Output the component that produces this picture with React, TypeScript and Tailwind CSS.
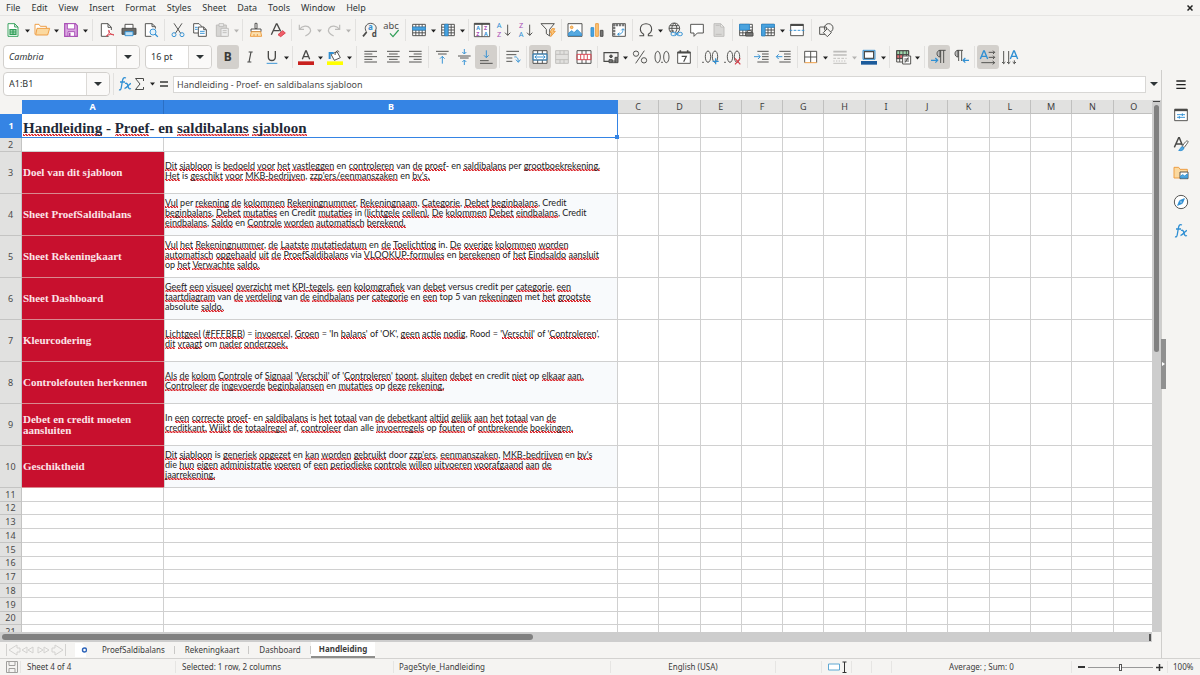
import { type ReactNode } from 'react';
import { clsx } from 'clsx';

const INK = '#4a4a48';
const BLUE = '#2f8fd3';
const ORANGE = '#ed9a3c';
const RED = '#d8414c';
const PURPLE = '#a94fb5';
const GREEN = '#2f9e57';
const MUTED = '#bdbcba';

type IconProps = { children: ReactNode; color?: string };

function Icon({ children, color = INK }: IconProps) {
  return (
    <svg
      className="h-4 w-4 shrink-0 overflow-visible"
      viewBox="0 0 24 24"
      fill="none"
      stroke={color}
      strokeWidth="1.4"
      aria-hidden="true"
    >
      {children}
    </svg>
  );
}

function Caret({ muted = false }: { muted?: boolean }) {
  return (
    <svg className="h-1 w-[5px]" viewBox="0 0 5 4" aria-hidden="true">
      <path d="M0 .5h5L2.500 3.500z" fill={muted ? '#b5b4b2' : '#222'} />
    </svg>
  );
}

type ToolProps = {
  label: string;
  children: ReactNode;
  active?: boolean;
  menu?: boolean;
  muted?: boolean;
};

function Tool({ label, children, active, menu, muted }: ToolProps) {
  return (
    <>
      <button
        type="button"
        aria-label={label}
        aria-pressed={active}
        className={clsx(
          'flex h-6 w-[22px] shrink-0 items-center justify-center rounded-[3px]',
          active && 'bg-[#d3d0cc]'
        )}
      >
        {children}
      </button>
      {menu && (
        <button
          type="button"
          aria-label={`${label} options`}
          className="flex h-6 w-[7px] shrink-0 items-center justify-center pt-[2px]"
        >
          <Caret muted={muted} />
        </button>
      )}
    </>
  );
}

function Sep({ wide = false }: { wide?: boolean }) {
  return (
    <div className={clsx('flex h-[22px] shrink-0 justify-center', wide ? 'w-[7px]' : 'w-[5px]')}>
      <div className="w-px bg-[#e2e1df]" />
    </div>
  );
}

/* Shared drawings */

function Grid({ color = INK }: { color?: string }) {
  return (
    <path
      stroke={color}
      fill="#fff"
      d="M2.500 3.500h19v17h-19zM2.500 7.750h19M2.500 12h19M2.500 16.250h19M7.250 3.500v17M12 3.500v17M16.750 3.500v17"
    />
  );
}

type SvgTextProps = { x: number; y: number; size: number; fill: string; children: string; bold?: boolean };

function SvgText({ x, y, size, fill, children, bold }: SvgTextProps) {
  return (
    <text
      x={x}
      y={y}
      fontSize={size}
      fill={fill}
      stroke="none"
      fontWeight={bold ? 700 : 400}
      fontFamily="Noto Sans, sans-serif"
    >
      {children}
    </text>
  );
}

function FxIcon() {
  return (
    <svg className="h-[18px] w-4" viewBox="0 0 16 18" fill="none" stroke={BLUE} strokeWidth="1.300" aria-hidden="true">
      <path d="M9 3c-2.500-1-3.200.5-3.600 3L4.200 13c-.3 1.700-1 2.200-2.200 1.700M3 7h5" />
      <path d="M8 8.500c2-.8 2.500.5 3 2.500s1 3.500 3 2.500M14 8.500c-2 0-4 5-6.500 5" />
    </svg>
  );
}

function StandardBar() {
  return (
    <div role="toolbar" aria-label="Standard" className="flex h-[27px] items-center pl-[2px]">
      <Tool label="New" menu>
        <Icon color={GREEN}>
          <path fill="#fff" d="M4.500 2.500h10l5 5v14h-15zM14.500 2.500v5h5" />
          <path fill="#bfe5cb" d="M7.500 11.500h9v7h-9zM7.500 15h9M12 11.500v7" strokeWidth="1.800" />
        </Icon>
      </Tool>
      <Tool label="Open" menu>
        <Icon color={ORANGE}>
          <path fill="#fff" d="M1.500 18.500v-15h6l2 3h9v4" />
          <path fill="#fbd9a0" d="M4.500 9.500h19l-3 10h-18z" />
        </Icon>
      </Tool>
      <Tool label="Save" menu>
        <Icon color={PURPLE}>
          <path fill="#dba6e2" d="M2.500 2.500h16l3 3v16h-19z" strokeWidth="1.800" />
          <path fill="#fff" d="M6.500 2.500h11v8h-11zM7.500 14.500h10v7h-10z" />
          <path d="M10 16v5" strokeWidth="2.500" />
        </Icon>
      </Tool>
      <Sep wide />
      <Tool label="Export as PDF">
        <Icon>
          <path fill="#fff" d="M18.500 12V8l-5-5.500h-10v19h11M13.500 2.500V8h5" />
          <path stroke={RED} d="M11 21c3-2 5-5 4.500-8-.8-2-2 0-.5 2 1.500 2.500 4 4 7.500 4.500-3-2-7-1-11.500 1.500z" />
        </Icon>
      </Tool>
      <Tool label="Print">
        <Icon>
          <path fill="#6a6a68" d="M1.500 9.500h21v9h-21z" />
          <path fill="#fff" d="M6 3.500h12v6H6z" />
          <path stroke={BLUE} fill="#bfe0f5" d="M6 14.500h12v6H6z" />
        </Icon>
      </Tool>
      <Tool label="Print Preview">
        <Icon>
          <path fill="#fff" d="M18.500 10V7l-5-4.500h-10v19h9M13.500 2.500V7h5" />
          <circle cx="15" cy="15" r="4.500" stroke={BLUE} fill="#e3f2fb" />
          <path stroke={BLUE} d="M18.300 18.300l4 4" strokeWidth="2" />
        </Icon>
      </Tool>
      <Sep />
      <Tool label="Cut">
        <Icon>
          <path d="M6 2l10 15M18 2L8 17" />
          <circle cx="6" cy="19" r="3" stroke={BLUE} />
          <circle cx="18" cy="19" r="3" stroke={BLUE} />
        </Icon>
      </Tool>
      <Tool label="Copy">
        <Icon>
          <path fill="#fff" d="M2.500 2.500h8l4 4v10h-12z" />
          <path fill="#fff" d="M9.500 7.500h8l4 4v10h-12zM17.500 7.500v4h4" />
          <path stroke={BLUE} d="M4.500 8h4M4.500 11h4M12 14h7M12 17h7" />
        </Icon>
      </Tool>
      <Tool label="Paste" menu muted>
        <Icon color={MUTED}>
          <path fill="#d6d5d3" d="M3.500 4.500h15v17h-15z" />
          <path fill="#eee" d="M7.500 2.500h7v4h-7zM10.500 9.500h11v12h-11zM13 13h6M13 16h6" />
        </Icon>
      </Tool>
      <Sep />
      <Tool label="Clone Formatting">
        <Icon>
          <path d="M10.500 2h3v8h-3z" />
          <path fill="#fff" d="M4.500 10.500h15v4h-15z" />
          <path stroke={ORANGE} fill="#fbe0b0" d="M5 14.500h14l1.500 7h-17zM9 18v3M14 18v3" />
        </Icon>
      </Tool>
      <Tool label="Clear Direct Formatting">
        <Icon>
          <path d="M2 19L9.500 3h1L16 14M5 13h9" strokeWidth="2" />
          <path stroke={RED} fill="#ef5f6a" d="M12 19l7-6 4 3.500-7 5.500z" />
        </Icon>
      </Tool>
      <Sep />
      <Tool label="Undo" menu muted>
        <Icon color={MUTED}>
          <path d="M3.500 4v7h7M4 10.500c4-5 12-6 15.500-1 3 5-2 9-7 11.500" strokeWidth="1.800" />
        </Icon>
      </Tool>
      <Tool label="Redo" menu muted>
        <Icon color={MUTED}>
          <path d="M20.500 4v7h-7M20 10.500c-4-5-12-6-15.500-1-3 5 2 9 7 11.500" strokeWidth="1.800" />
        </Icon>
      </Tool>
      <Sep wide />
      <Tool label="Find and Replace">
        <Icon>
          <path d="M6.500 14.500c-4-6 0-12.500 6.500-12.500s10 6 7.500 10" />
          <path d="M7 15L1.500 21.500" strokeWidth="2.600" />
          <SvgText x={9} y={12} size={12} fill={BLUE} bold>a</SvgText>
          <SvgText x={14.500} y={23} size={12} fill={INK} bold>d</SvgText>
        </Icon>
      </Tool>
      <Tool label="Spelling">
        <Icon>
          <SvgText x={-1} y={11} size={14} fill={INK}>abc</SvgText>
          <path stroke={GREEN} d="M9 17l4.500 5L22 12" strokeWidth="1.800" />
        </Icon>
      </Tool>
      <Sep />
      <Tool label="Row" menu>
        <Icon>
          <Grid />
          <path fill="#4aa3de" stroke={BLUE} d="M2.500 7.750h19V12h-19z" />
        </Icon>
      </Tool>
      <Tool label="Column" menu>
        <Icon>
          <Grid />
          <path fill="#4aa3de" stroke={BLUE} d="M7.250 3.500H12v17H7.250z" />
        </Icon>
      </Tool>
      <Sep />
      <Tool label="Sort">
        <Icon>
          <path fill="#fff" d="M.5 2h23v20H.5zM12 2v20" />
          <path d="M.5 3h23" strokeWidth="2.500" />
          <SvgText x={3.500} y={12} size={8} fill={BLUE} bold>A</SvgText>
          <SvgText x={3.500} y={21} size={8} fill={PURPLE} bold>Z</SvgText>
          <SvgText x={15} y={12} size={8} fill={PURPLE} bold>Z</SvgText>
          <SvgText x={15} y={21} size={8} fill={BLUE} bold>A</SvgText>
        </Icon>
      </Tool>
      <Tool label="Sort Ascending">
        <Icon>
          <SvgText x={1} y={9} size={11} fill={BLUE}>A</SvgText>
          <SvgText x={1.500} y={23} size={11} fill={PURPLE}>Z</SvgText>
          <path d="M17.500 4v16M13.500 16l4 4 4-4" />
        </Icon>
      </Tool>
      <Tool label="Sort Descending">
        <Icon>
          <SvgText x={1.500} y={9} size={11} fill={PURPLE}>Z</SvgText>
          <SvgText x={1} y={23} size={11} fill={BLUE}>A</SvgText>
          <path d="M17.500 4v16M13.500 16l4 4 4-4" />
        </Icon>
      </Tool>
      <Tool label="AutoFilter">
        <Icon>
          <path d="M1.500 2.500h20l-7 8.500v10l-5-3.500V11z" />
          <path stroke={ORANGE} fill="#fbc77a" d="M18 10h4l-2 4h3l-7 8 1.500-6H15z" />
        </Icon>
      </Tool>
      <Sep />
      <Tool label="Insert Image">
        <Icon>
          <path fill="#fff" d="M1.500 2.500h21v19h-21z" />
          <path fill="#55a9e0" stroke={BLUE} d="M2.500 20.500v-4l5-3.500 3 3 5-4.500 6 6v3z" />
          <circle cx="7" cy="8" r="2" stroke={ORANGE} fill="#fbc77a" />
        </Icon>
      </Tool>
      <Tool label="Insert Chart">
        <Icon>
          <path fill="#4aa3de" stroke={BLUE} d="M3 8.500h4v13H3z" />
          <path fill="#fbc77a" stroke={ORANGE} d="M10 2.500h4v19h-4z" />
          <path fill="#777" d="M17 12.500h4v9h-4z" />
        </Icon>
      </Tool>
      <Tool label="Insert Pivot Table">
        <Icon>
          <path fill="#fff" d="M2.500 2.500h19v19h-19z" />
          <path d="M2.500 4.500h19M4.500 2.500v19" stroke="#777" strokeWidth="4" strokeDasharray="3.500 1.200" />
          <path stroke={BLUE} d="M10 18.500c5 0 8-2 8-8M15.500 12.500l2.500-2.500 2.500 2.500M12.500 16L10 18.500l2.500 2" />
        </Icon>
      </Tool>
      <Sep />
      <Tool label="Special Character" menu>
        <Icon>
          <path d="M2 20.500h6.500v-2C5 16.500 3.500 14 3.500 11c0-5 3.500-8.500 8.500-8.500s8.500 3.500 8.500 8.500c0 3-1.500 5.500-5 7.500v2H22" strokeWidth="1.600" />
        </Icon>
      </Tool>
      <Tool label="Insert Hyperlink">
        <Icon>
          <circle cx="11" cy="9.500" r="8" />
          <path d="M3 9.500h16M11 1.500c-5 5-5 11 0 16M11 1.500c5 5 5 11 0 16M4.500 5.500h13M4.500 13.500h6" />
          <rect x="6" y="15.500" width="8" height="5" rx="2.500" stroke={BLUE} fill="#f5f4f2" />
          <rect x="15" y="15.500" width="8" height="5" rx="2.500" stroke={BLUE} fill="#f5f4f2" />
          <path stroke={BLUE} d="M11 18h7" />
        </Icon>
      </Tool>
      <Tool label="Insert Comment">
        <Icon>
          <path fill="#fff" d="M2.500 3.500h19v13h-9l-5 5v-5h-5z" />
        </Icon>
      </Tool>
      <Tool label="Headers and Footers">
        <Icon color={MUTED}>
          <path fill="#d9d8d6" d="M4.500 2.500h10l5 5v14h-15zM14.500 2.500v5h5M7 5h6M7 18.500h9" />
        </Icon>
      </Tool>
      <Sep />
      <Tool label="Define Print Area">
        <Icon>
          <Grid />
          <path fill="#4aa3de" stroke={BLUE} d="M2.500 3.500H17v8.500H2.500z" />
          <path fill="#fff" d="M14 13h6v3h-6z" />
          <path fill="#777" d="M11.500 16h11v5h-11z" />
        </Icon>
      </Tool>
      <Tool label="Freeze Rows and Columns" menu>
        <Icon>
          <Grid />
          <path fill="#4aa3de" stroke={BLUE} d="M2.500 3.500h19v4.250H7.500v13h-5z" />
        </Icon>
      </Tool>
      <Tool label="Split Window">
        <Icon>
          <path fill="#fff" d="M2.500 3.500h19v17h-19z" />
          <path d="M2.500 4.500h19" strokeWidth="3" />
          <path stroke={BLUE} d="M1 12.500h22" strokeDasharray="4 2" />
        </Icon>
      </Tool>
      <Sep wide />
      <Tool label="Show Draw Functions">
        <Icon>
          <path d="M2.500 7.500h10v11h-10z" />
          <circle cx="16" cy="9" r="6.500" />
          <path fill="#f5f4f2" d="M14 10l6 6-6 6-6-6z" />
        </Icon>
      </Tool>
    </div>
  );
}

type ComboProps = { id: string; label: string; value: string; className: string; italic?: boolean };

function Combo({ id, label, value, className, italic }: ComboProps) {
  return (
    <div className={clsx('flex h-6 shrink-0 rounded-[4px] border border-[#d2d0cd] bg-white', className)}>
      <label htmlFor={id} className="sr-only">
        {label}
      </label>
      <input
        id={id}
        defaultValue={value}
        className={clsx('min-w-0 flex-1 bg-transparent px-[5px] text-[9px] text-[#2e3436] outline-none', italic && 'italic')}
      />
      <button
        type="button"
        aria-label={`Open ${label}`}
        className="flex w-[23px] items-center justify-center rounded-r-[4px] border-l border-[#dcdad7] bg-[#faf9f8]"
      >
        <svg className="h-1 w-2" viewBox="0 0 8 4" aria-hidden="true">
          <path d="M0 0h8L4 4z" fill="#2e3436" />
        </svg>
      </button>
    </div>
  );
}

function FormattingBar() {
  return (
    <div role="toolbar" aria-label="Formatting" className="flex h-[27px] items-center pl-[3px]">
      <Combo id="font-name" label="Font Name" value="Cambria" className="w-[137px]" italic />
      <Combo id="font-size" label="Font Size" value="16 pt" className="mr-[5px] ml-[5px] w-[67px]" />
      <Tool label="Bold" active>
        <Icon>
          <SvgText x={5.500} y={18.500} size={18} fill="#3a3a38" bold>B</SvgText>
        </Icon>
      </Tool>
      <Tool label="Italic">
        <Icon>
          <path d="M10 4.500h6M8 19.500h6M13.500 4.500l-3 15" strokeWidth="1.800" />
        </Icon>
      </Tool>
      <Tool label="Underline" menu>
        <Icon>
          <path d="M6.500 3v9c0 7 10.500 7 10.500 0V3" strokeWidth="2" />
          <path stroke={BLUE} d="M4 21.500h16" />
        </Icon>
      </Tool>
      <Sep />
      <Tool label="Font Color" menu>
        <Icon>
          <path d="M6.500 15.500L11.500 3h1l5 12.500M8 11.500h8" strokeWidth="2" />
          <path fill="#c9211e" stroke="none" d="M0 18.500h24V24H0z" />
        </Icon>
      </Tool>
      <Tool label="Background Color" menu>
        <Icon>
          <path fill="#fff" d="M6 8l9-4 5 9-9 4zM12 9c0-5 5-9 6-4" />
          <path stroke={BLUE} d="M4 15V6h6" strokeWidth="3" />
          <path fill="#ffff00" stroke="none" d="M0 18.500h24V24H0z" />
        </Icon>
      </Tool>
      <Sep wide />
      <Tool label="Align Left">
        <Icon><path d="M2 3.500h19M2 7.500h12M2 11.500h19M2 15.500h12M2 19.500h19" /></Icon>
      </Tool>
      <Tool label="Center Horizontally">
        <Icon><path d="M3 3.500h19M6 7.500h13M3 11.500h19M6 15.500h13M3 19.500h19" /></Icon>
      </Tool>
      <Tool label="Align Right">
        <Icon><path d="M3 3.500h19M10 7.500h12M3 11.500h19M10 15.500h12M3 19.500h19" /></Icon>
      </Tool>
      <Sep />
      <Tool label="Align Top">
        <Icon>
          <path d="M3 3.500h19M6 7.500h13" />
          <path stroke={BLUE} d="M12.500 22V11M9 14.500l3.500-3.500 3.500 3.500" />
        </Icon>
      </Tool>
      <Tool label="Center Vertically">
        <Icon>
          <path d="M3 10.500h19M6 13.500h13" />
          <path stroke={BLUE} d="M12.500 0v7M9.500 4.500l3 3 3-3M12.500 24v-7M9.500 19.500l3-3 3 3" />
        </Icon>
      </Tool>
      <Tool label="Align Bottom" active>
        <Icon>
          <path d="M3 17.500h13M3 21.500h19" />
          <path stroke={BLUE} d="M12.500 2v11M9 9.500l3.500 3.500L16 9.500" />
        </Icon>
      </Tool>
      <Sep />
      <Tool label="Wrap Text">
        <Icon>
          <path d="M2 3.500h19M2 8.500h15M2 13.500h9M2 18.500h9" />
          <path stroke={BLUE} d="M14 12c4-1 6 2 6 7M16.500 16l3.500 4 3-4" />
        </Icon>
      </Tool>
      <Sep />
      <Tool label="Merge and Center Cells" active>
        <Icon>
          <path fill="#fff" d="M1.500 2.500h21v19h-21zM1.500 7.500h21M1.500 16.500h21M8.500 2.500v5M15.500 2.500v5M8.500 16.500v5M15.500 16.500v5" />
          <path stroke={BLUE} d="M1.500 7.500h21v9h-21zM4 12h16M7 9.500L4.500 12 7 14.500M17 9.500l2.500 2.500-2.500 2.500" />
        </Icon>
      </Tool>
      <Tool label="Merge Cells">
        <Icon color={MUTED}>
          <path fill="#e2e1df" d="M2.500 2.500h19v19h-19zM2.500 8h19M2.500 16h19M9 2.500V8M15 2.500V8M9 16v5.500M15 16v5.500" />
        </Icon>
      </Tool>
      <Tool label="Unmerge Cells">
        <Icon>
          <path fill="#fff" d="M1.500 2.500h21v19h-21zM9 2.500V8M15 2.500V8M9 16v5.500M15 16v5.500" />
          <path stroke={RED} d="M1.500 8h21v8h-21zM7 8v8M12 8v8M17 8v8" />
        </Icon>
      </Tool>
      <Sep />
      <Tool label="Format as Currency" menu>
        <Icon>
          <path d="M11 18.500H1.500v-13h21v7" strokeWidth="1.700" />
          <circle cx="12" cy="11" r="2" fill="#555" />
          <path fill="#777" d="M9 16h5v4.500H9zM18 12.500h4.500v8H18z" />
          <path fill="#ccc" d="M14 18h4v2.500h-4z" />
        </Icon>
      </Tool>
      <Tool label="Format as Percent">
        <Icon>
          <circle cx="6" cy="7" r="4" />
          <circle cx="18" cy="17" r="4" />
          <path d="M18.500 2.500l-13 19" />
        </Icon>
      </Tool>
      <Tool label="Format as Number">
        <Icon>
          <ellipse cx="5.500" cy="12" rx="4" ry="8.500" />
          <ellipse cx="18.500" cy="12" rx="4" ry="8.500" />
          <path d="M12 19v2" strokeWidth="2" />
        </Icon>
      </Tool>
      <Tool label="Format as Date">
        <Icon>
          <path fill="#fff" d="M2.500 4.500h19v17h-19z" />
          <path d="M2.500 5.500h19M6.500 2v4M17.500 2v4" strokeWidth="2.400" />
          <path d="M8.500 11h7l-4 8" strokeWidth="1.800" />
        </Icon>
      </Tool>
      <Sep />
      <Tool label="Add Decimal Place">
        <Icon>
          <path d="M0 19v2" strokeWidth="2" />
          <ellipse cx="7.500" cy="11.500" rx="4" ry="8.500" />
          <ellipse cx="18" cy="11.500" rx="4" ry="8.500" />
          <path stroke={BLUE} d="M19 14v9M14.500 18.500h9" strokeWidth="1.800" />
        </Icon>
      </Tool>
      <Tool label="Delete Decimal Place">
        <Icon>
          <path d="M0 19v2" strokeWidth="2" />
          <ellipse cx="7.500" cy="11.500" rx="4" ry="8.500" />
          <ellipse cx="18" cy="11.500" rx="4" ry="8.500" />
          <path stroke={RED} d="M15 14l8 9M23 14l-8 9" strokeWidth="1.800" />
        </Icon>
      </Tool>
      <Sep wide />
      <Tool label="Increase Indent">
        <Icon>
          <path d="M5 3.500h17M12 7.500h10M12 11.500h10M12 15.500h10M5 19.500h17" />
          <path stroke={BLUE} d="M0 11.500h9M6 8l3.500 3.500L6 15" />
        </Icon>
      </Tool>
      <Tool label="Decrease Indent">
        <Icon>
          <path d="M5 3.500h17M12 7.500h10M12 11.500h10M12 15.500h10M5 19.500h17" />
          <path stroke={BLUE} d="M9.500 11.500H.5M4 8L.5 11.500 4 15" />
        </Icon>
      </Tool>
      <Sep />
      <Tool label="Borders" menu>
        <Icon>
          <path fill="#fff" d="M2.500 20.500v-17h18v17M11.500 3.500v17M2.500 12h18" />
          <path stroke={ORANGE} d="M2.500 20.500h18" />
        </Icon>
      </Tool>
      <Tool label="Border Style" menu muted>
        <Icon color={MUTED}>
          <path d="M2 4h20M2 9h20" strokeWidth="2.400" />
          <path d="M2 14h20" strokeDasharray="4 2" />
          <path d="M2 18h20" strokeDasharray="2 2" />
          <path d="M2 21.500h20" />
        </Icon>
      </Tool>
      <Tool label="Border Color" menu>
        <Icon>
          <path fill="#fff" d="M5 4h14v10H5z" strokeWidth="2" />
          <path stroke={BLUE} d="M3 2h18v13.500H3z" />
          <path fill="#1c5b9b" stroke="none" d="M0 18h24v5.500H0z" />
        </Icon>
      </Tool>
      <Sep />
      <Tool label="Conditional Formatting" menu>
        <Icon>
          <path fill="#9fd9ae" d="M2.500 2.500h18v6h-18z" />
          <path fill="#e87078" d="M2.500 8.500h9v6h-9z" />
          <path d="M2.500 2.500h18v17h-18zM2.500 8.500h18M2.500 14h18M7 2.500v17M12 2.500v17M17 2.500v17" />
          <path fill="#fff" d="M11.500 10.500h12v12h-12zM14 15h7M14 18h7M20 12.500l-5 8" />
        </Icon>
      </Tool>
      <Sep wide />
      <Tool label="Left-To-Right" active>
        <Icon>
          <path fill="#bbb" d="M13.500 12c-6 0-6-10 0-10z" />
          <path d="M13 2h9M14.500 2v19M19 2v19" />
          <path stroke={BLUE} d="M0 17h10M6.500 13.500L10 17l-3.500 3.500" strokeWidth="1.800" />
        </Icon>
      </Tool>
      <Tool label="Right-To-Left">
        <Icon>
          <path fill="#bbb" d="M7.500 12c-6 0-6-10 0-10z" />
          <path d="M7 2h8M8.500 2v16M13 2v16" />
          <path stroke={BLUE} d="M24 17h-9M18.500 13.500L15 17l3.500 3.500" strokeWidth="1.800" />
        </Icon>
      </Tool>
      <Sep />
      <Tool label="Text Direction From Left to Right" active>
        <Icon>
          <path stroke={BLUE} d="M.5 15L5.500 3h1l5 12M2.500 11h7" strokeWidth="2" />
          <path d="M13 5h9M13 12.500h9M2 20.500h20M19.500 2.500L22 5l-2.500 2.500M19.500 10l2.500 2.500-2.500 2.500M19 18l3 2.500-3 2.500" />
        </Icon>
      </Tool>
      <Tool label="Text Direction From Top to Bottom">
        <Icon>
          <path stroke={BLUE} d="M12.500 15L17.500 3h1l5 12M14.500 11h7" strokeWidth="2" />
          <path d="M2.500 3v19M10 3v19M18.500 17v5M0 19.500L2.500 22 5 19.500M7.500 19.500L10 22l2.500-2.500M16 19.500l2.500 2.500 2.500-2.500" />
        </Icon>
      </Tool>
    </div>
  );
}

function FormulaBar() {
  return (
    <div className="flex h-[30px] shrink-0 items-start pt-[2px] pl-[3px]">
      <Combo id="name-box" label="Name Box" value="A1:B1" className="w-[107px]" />
      <div className="flex h-6 flex-1 items-center">
        <Sep wide />
        <button type="button" aria-label="Function Wizard" className="flex w-4 justify-center">
          <FxIcon />
        </button>
        <button type="button" aria-label="Select Function" className="flex w-[22px] items-center justify-between pl-[2px]">
          <svg className="h-3 w-[9px]" viewBox="0 0 9 12" fill="none" stroke={INK} aria-hidden="true">
            <path d="M8.500 3V.5h-8L5 6 .5 11.500h8V9" />
          </svg>
          <Caret />
        </button>
        <button type="button" aria-label="Formula" className="flex w-[18px] justify-center">
          <svg className="h-2 w-2" viewBox="0 0 8 8" stroke="#3a3a38" strokeWidth="1.400" aria-hidden="true">
            <path d="M0 2h8M0 6h8" />
          </svg>
        </button>
        <label htmlFor="input-line" className="sr-only">
          Input line
        </label>
        <input
          id="input-line"
          defaultValue="Handleiding - Proef- en saldibalans sjabloon"
          className="h-[17px] min-w-0 flex-1 border border-[#d8d7d5] bg-white px-[3px] text-[9px] text-[#4b4b4b] outline-none"
        />
        <button type="button" aria-label="Expand Formula Bar" className="flex w-[15px] justify-center">
          <svg className="h-1 w-2" viewBox="0 0 8 4" aria-hidden="true">
            <path d="M0 0h8L4 4z" fill="#2e3436" />
          </svg>
        </button>
      </div>
    </div>
  );
}

type GuideRow = { label: string[]; lines: string[] };

const GUIDE: GuideRow[] = [
  {
    label: ['Doel van dit sjabloon'],
    lines: [
      'Dit sjabloon is bedoeld voor het vastleggen en controleren van de proef- en saldibalans per grootboekrekening.',
      "Het is geschikt voor MKB-bedrijven, zzp'ers/eenmanszaken en bv's.",
    ],
  },
  {
    label: ['Sheet ProefSaldibalans'],
    lines: [
      'Vul per rekening de kolommen Rekeningnummer, Rekeningnaam, Categorie, Debet beginbalans, Credit',
      'beginbalans, Debet mutaties en Credit mutaties in (lichtgele cellen). De kolommen Debet eindbalans, Credit',
      'eindbalans, Saldo en Controle worden automatisch berekend.',
    ],
  },
  {
    label: ['Sheet Rekeningkaart'],
    lines: [
      'Vul het Rekeningnummer, de Laatste mutatiedatum en de Toelichting in. De overige kolommen worden',
      'automatisch opgehaald uit de ProefSaldibalans via VLOOKUP-formules en berekenen of het Eindsaldo aansluit',
      'op het Verwachte saldo.',
    ],
  },
  {
    label: ['Sheet Dashboard'],
    lines: [
      'Geeft een visueel overzicht met KPI-tegels, een kolomgrafiek van debet versus credit per categorie, een',
      'taartdiagram van de verdeling van de eindbalans per categorie en een top 5 van rekeningen met het grootste',
      'absolute saldo.',
    ],
  },
  {
    label: ['Kleurcodering'],
    lines: [
      "Lichtgeel (#FFFBEB) = invoercel, Groen = 'In balans' of 'OK', geen actie nodig, Rood = 'Verschil' of 'Controleren',",
      'dit vraagt om nader onderzoek.',
    ],
  },
  {
    label: ['Controlefouten herkennen'],
    lines: [
      "Als de kolom Controle of Signaal 'Verschil' of 'Controleren' toont, sluiten debet en credit niet op elkaar aan.",
      'Controleer de ingevoerde beginbalansen en mutaties op deze rekening.',
    ],
  },
  {
    label: ['Debet en credit moeten', 'aansluiten'],
    lines: [
      'In een correcte proef- en saldibalans is het totaal van de debetkant altijd gelijk aan het totaal van de',
      'creditkant. Wijkt de totaalregel af, controleer dan alle invoerregels op fouten of ontbrekende boekingen.',
    ],
  },
  {
    label: ['Geschiktheid'],
    lines: [
      "Dit sjabloon is generiek opgezet en kan worden gebruikt door zzp'ers, eenmanszaken, MKB-bedrijven en bv's",
      'die hun eigen administratie voeren of een periodieke controle willen uitvoeren voorafgaand aan de',
      'jaarrekening.',
    ],
  },
];

// Words the English spell checker accepts
const ACCEPTED = new Set([
  'is', 'en', 'van', 'per', 'in', 'of', 'top', 'met', 'versus', 'credit', 'via', 'op', 'om',
  'absolute', 'ok', 'rood', 'door', 'die', 'dan', 'alle', 'af',
]);

// Fine red zigzag along the foot of a word
const squiggle =
  'bg-[linear-gradient(45deg,transparent_30%,#d9262c_30%,#d9262c_75%,transparent_75%)] bg-[length:3px_2px] bg-bottom bg-repeat-x';

function Spelled({ text }: { text: string }) {
  return (
    <>
      {text.split(' ').map((word, i) => {
        const bare = word.replace(/[^a-z]/gi, '').toLowerCase();
        const ok = bare === '' || ACCEPTED.has(bare);
        const core = word.replace(/^[('=]+|[-,')]+$/g, '');
        const [before, after] = word.split(core || word);
        return (
          <span key={i}>
            {i > 0 && ' '}
            {ok ? (
              word
            ) : (
              <>
                {before}
                <span className={squiggle}>{core}</span>
                {after}
              </>
            )}
          </span>
        );
      })}
    </>
  );
}

const COLUMNS = ['C', 'D', 'E', 'F', 'G', 'H', 'I', 'J', 'K', 'L', 'M', 'N', 'O'];
const EMPTY_ROWS = [11, 12, 13, 14, 15, 16, 17, 18, 19, 20, 21];

function EmptyCells() {
  return COLUMNS.map((c) => <td key={c} className="border-r border-b border-[#d0d0d0]" />);
}

const rowHead = 'border-r border-b border-[#c4c4c3] bg-[#e1e1e0] p-0 text-[9px] leading-[10px] font-normal text-[#4a4a4a]';

function Sheet() {
  return (
    <table className="w-[calc(100%+3px)] table-fixed border-separate border-spacing-0 bg-white">
      <colgroup>
        <col className="w-[22px]" />
        <col className="w-[142px]" />
        <col className="w-[454px]" />
        {COLUMNS.map((c) => (
          <col key={c} />
        ))}
      </colgroup>
      <thead>
        <tr className="h-[14px] text-[9px] leading-[12px]">
          <td className="bg-[#f5f4f2] p-0" />
          <th className="border-r border-[#2b6fc4] bg-[#3584e4] p-0 text-white">A</th>
          <th className="bg-[#3584e4] p-0 text-white">B</th>
          {COLUMNS.map((c) => (
            <th key={c} className="border-r border-b border-[#c0c0bf] bg-[#e1e1e0] p-0 font-normal text-[#3d3d3d]">
              {c}
            </th>
          ))}
        </tr>
      </thead>
      <tbody>
        <tr className="h-6">
          <th className="bg-[#3584e4] p-0 text-[9px] text-white">1</th>
          <td
            colSpan={2}
            className="relative border-r border-b border-[#3584e4] p-0 pt-[4px] pl-px font-['Liberation_Serif',serif] text-[15px] leading-[18px] font-bold whitespace-nowrap text-[#1f2937]"
          >
            <Spelled text="Handleiding - Proef- en saldibalans sjabloon" />
            <span className="absolute -right-[2px] -bottom-[2px] h-1 w-1 bg-[#3584e4]" />
          </td>
          <EmptyCells />
        </tr>
        <tr className="h-[14px]">
          <th className={rowHead}>2</th>
          <td className="border-r border-b border-[#d0d0d0]" />
          <td className="border-r border-b border-[#d0d0d0]" />
          <EmptyCells />
        </tr>
        {GUIDE.map((row, i) => (
          <tr key={row.label[0]} className="h-[42px]">
            <th className={rowHead}>{i + 3}</th>
            <td className="border-b border-[#d9898f] bg-[#c8102e] p-0 pl-px font-['Liberation_Serif',serif] text-[11px] leading-[11px] font-bold whitespace-nowrap text-[#fbe4e8]">
              {row.label.map((line) => (
                <div key={line}>{line}</div>
              ))}
            </td>
            <td
              className={clsx(
                "border-r border-b border-l border-[#d0d0d0] p-0 pb-[3px] font-['Lato',sans-serif] text-[9px] leading-[10px] whitespace-nowrap text-[#1c1c1c]",
                i % 2 === 1 && 'bg-[#f8fafc]'
              )}
            >
              {row.lines.map((line) => (
                <div key={line}>
                  <Spelled text={line} />
                </div>
              ))}
            </td>
            <EmptyCells />
          </tr>
        ))}
        {EMPTY_ROWS.map((n) => (
          <tr key={n} className={n % 4 === 0 ? 'h-[13px]' : 'h-[14px]'}>
            <th className={rowHead}>{n}</th>
            <td className="border-r border-b border-[#d0d0d0]" />
            <td className="border-r border-b border-[#d0d0d0]" />
            <EmptyCells />
          </tr>
        ))}
      </tbody>
    </table>
  );
}

const TABS = ['ProefSaldibalans', 'Rekeningkaart', 'Dashboard'];

function SheetTabs() {
  return (
    <div className="flex h-4 shrink-0 items-stretch pl-[5px] text-[8px] text-[#3b3b3b]">
      <button type="button" aria-label="Scroll sheets" className="mr-2 flex w-[62px] items-center">
        <svg className="h-3 w-[62px]" viewBox="0 0 62 12" fill="none" stroke="#d3d2d0" aria-hidden="true">
          <path d="M1.500 0v12M12 1L4 6l8 5V8h3V4h-3zM22 3l-5 3 5 3zM28 3l-5 3 5 3zM33 3v6l5-3zM39 3v6l5-3zM50 1l8 5-8 5V8h-3V4h3zM60.500 0v12" />
        </svg>
      </button>
      <button type="button" aria-label="Add Sheet" className="mr-[5px] flex w-3 items-center">
        <svg className="h-[14px] w-3" viewBox="0 0 12 14" fill="none" aria-hidden="true">
          <path d="M0 0h7l4 4v10H0z" fill="#fff" />
          <circle cx="9.500" cy="7" r="2" fill="#fff" stroke="#2b62b8" strokeWidth="1.400" />
        </svg>
      </button>
      <div role="tablist" aria-label="Sheets" className="flex items-stretch">
        {TABS.map((tab) => (
          <button key={tab} role="tab" type="button" aria-selected="false" className="flex items-center pl-[10px]">
            <span className="pr-[9px]">{tab}</span>
            <span className="h-2 w-px bg-[#c9c8c6]" />
          </button>
        ))}
        <button role="tab" type="button" aria-selected="true" className="border-b-2 border-[#8e8e8c] bg-white px-2 font-bold">
          Handleiding
        </button>
      </div>
    </div>
  );
}

function StatusBar() {
  return (
    <footer className="flex h-[17px] shrink-0 items-center border-t border-[#d3d2d0] text-[8px] text-[#3b3b3b]">
      <div className="flex w-[21px] justify-center border-r border-[#e6e5e3] pl-[3px]">
        <svg className="h-3 w-3" viewBox="0 0 12 12" fill="none" stroke="#a09f9d" aria-label="Document saved">
          <path d="M.5.5h11v11H.5zM3 .5v4h6v-4M3 11.500v-4h6v4" />
        </svg>
      </div>
      <div className="w-[155px] border-r border-[#e6e5e3] pl-[6px]">Sheet 4 of 4</div>
      <div className="w-[218px] border-r border-[#e6e5e3] pl-[6px]">Selected: 1 row, 2 columns</div>
      <div className="flex-1 border-r border-[#e6e5e3] pl-[5px]">PageStyle_Handleiding</div>
      <div className="w-[165px] border-r border-[#e6e5e3] text-center">English (USA)</div>
      <div className="w-[46px] border-r border-[#e6e5e3]">&nbsp;</div>
      <div className="flex w-[30px] items-center border-r border-[#e6e5e3] pl-[6px]">
        <svg className="h-3 w-5" viewBox="0 0 20 12" fill="none" aria-label="Standard selection">
          <path d="M.5 3h11v6H.5z" fill="#fff" stroke="#5fa8d3" />
          <path d="M14.500 1h4M14.500 11.500h4M16.500 1v10.500" stroke="#333" />
        </svg>
      </div>
      <div className="w-5 border-r border-[#e6e5e3]">&nbsp;</div>
      <div className="w-5 border-r border-[#e6e5e3]">&nbsp;</div>
      <div className="w-[180px] border-r border-[#e6e5e3] text-center">Average: ; Sum: 0</div>
      <div className="flex w-[96px] items-center gap-[3px] border-r border-[#e6e5e3] pl-[6px]">
        <button type="button" aria-label="Zoom Out" className="flex h-3 w-[7px] items-center">
          <span className="h-[2px] w-full bg-[#333]" />
        </button>
        <input
          type="range"
          aria-label="Zoom"
          min={0}
          max={200}
          defaultValue={100}
          className="h-3 w-[65px] appearance-none bg-transparent [&::-webkit-slider-runnable-track]:h-px [&::-webkit-slider-runnable-track]:bg-[#999] [&::-webkit-slider-thumb]:-mt-[3px] [&::-webkit-slider-thumb]:h-[7px] [&::-webkit-slider-thumb]:w-[3px] [&::-webkit-slider-thumb]:appearance-none [&::-webkit-slider-thumb]:border [&::-webkit-slider-thumb]:border-[#555] [&::-webkit-slider-thumb]:bg-white"
        />
        <button type="button" aria-label="Zoom In" className="flex h-3 w-[7px] items-center">
          <svg className="h-[7px] w-[7px]" viewBox="0 0 7 7" stroke="#333" strokeWidth="1.500" aria-hidden="true">
            <path d="M0 3.500h7M3.500 0v7" />
          </svg>
        </button>
      </div>
      <div className="w-[32px] pl-[5px]">100%</div>
    </footer>
  );
}

function SideBar() {
  return (
    <aside className="flex w-[39px] shrink-0 flex-col items-center gap-[5px] border-l border-[#cfcecc] pt-[3px]">
      <Tool label="Sidebar Settings">
        <Icon>
          <path d="M5 6h14M5 11.500h14M5 17h14" stroke="#222" strokeWidth="2" />
        </Icon>
      </Tool>
      <div className="flex flex-col gap-[5px] pt-px">
        <Tool label="Properties">
          <Icon>
            <path fill="#fff" d="M2.500 3.500h19v17h-19z" />
            <path d="M2.500 4.500h19" strokeWidth="3.500" />
            <path stroke={BLUE} d="M6 11.500h12M6 15.500h12M14 9.500v4M9.500 13.500v4" />
          </Icon>
        </Tool>
        <Tool label="Styles">
          <Icon>
            <path d="M2 17L8.500 2.500h1L14 14M4.500 12h9" strokeWidth="2.200" />
            <path fill="#fff" d="M22 7.500c1.500 1 0 3-5.500 10l-2.500-2C18 9 20.500 6.500 22 7.500z" />
            <path fill="#55a9e0" stroke={BLUE} d="M14 16l2.500 2c-1 4-5 4.500-8 3.500 2.500-1 2.500-5 5.500-5.500z" />
          </Icon>
        </Tool>
        <Tool label="Gallery">
          <Icon color={ORANGE}>
            <path fill="#fbd9a0" d="M1.500 19.500v-16h7l2 3h11v13z" />
            <path fill="#fff" stroke={INK} d="M10.500 10.500h12v10h-12z" />
            <path fill="#55a9e0" stroke={BLUE} d="M11.500 19.500v-3l3-2 3 2 4-3v6z" />
          </Icon>
        </Tool>
        <Tool label="Navigator">
          <Icon>
            <circle cx="12" cy="12" r="10" fill="#fff" />
            <path fill="#2f8fd3" stroke={BLUE} d="M17 7l-3 7-7 3 3-7z" />
            <circle cx="12" cy="12" r="1" fill="#fff" stroke="none" />
          </Icon>
        </Tool>
        <Tool label="Functions">
          <FxIcon />
        </Tool>
      </div>
    </aside>
  );
}

const MENUS = ['File', 'Edit', 'View', 'Insert', 'Format', 'Styles', 'Sheet', 'Data', 'Tools', 'Window', 'Help'];

export default function App() {
  return (
    <div className="flex h-screen flex-col overflow-hidden bg-[#f5f4f2] font-['Noto_Sans',sans-serif]">
      <header className="shrink-0">
        <nav aria-label="Menu" className="flex h-4 items-center justify-between border-b border-[#e6e5e3] pr-[7px] pl-[6px]">
          <div className="flex gap-[11px] text-[9px] leading-[16px] text-[#2e3436]">
            {MENUS.map((menu) => (
              <button key={menu} type="button">
                {menu}
              </button>
            ))}
          </div>
          <button type="button" aria-label="Close Document">
            <svg className="h-[6px] w-[6px]" viewBox="0 0 6 6" stroke="#222" strokeWidth="1.500" aria-hidden="true">
              <path d="M.5.5l5 5M5.500.5l-5 5" />
            </svg>
          </button>
        </nav>
        <StandardBar />
        <FormattingBar />
      </header>
      <div className="flex min-h-0 flex-1">
        <main className="flex min-w-0 flex-1 flex-col">
          <FormulaBar />
          <div className="flex min-h-0 flex-1">
            <div className="min-w-0 flex-1 overflow-hidden">
              <Sheet />
            </div>
            <div className="flex w-[9px] flex-col items-center bg-[#cdcdcd]">
              <div className="mt-px mb-[3px] h-px w-[7px] bg-[#444]" />
              <div className="h-[247px] w-[5px] rounded-full bg-[#808080]" />
            </div>
          </div>
          <div className="mr-[9px] flex h-[10px] shrink-0 items-center justify-between bg-[#cdcdcd] pr-px pl-[2px]">
            <div className="h-[6px] w-[531px] rounded-full bg-[#808080]" />
            <div className="h-[7px] w-[2px] bg-[#555]" />
          </div>
          <SheetTabs />
        </main>
        <div className="relative flex">
          <button
            type="button"
            aria-label="Hide Sidebar"
            className="absolute top-[269px] left-0 flex h-[50px] w-[5px] items-center justify-center bg-[#909090]"
          >
            <svg className="h-1 w-[3px]" viewBox="0 0 3 4" aria-hidden="true">
              <path d="M0 0l3 2-3 2z" fill="#fff" />
            </svg>
          </button>
          <SideBar />
        </div>
      </div>
      <StatusBar />
    </div>
  );
}
